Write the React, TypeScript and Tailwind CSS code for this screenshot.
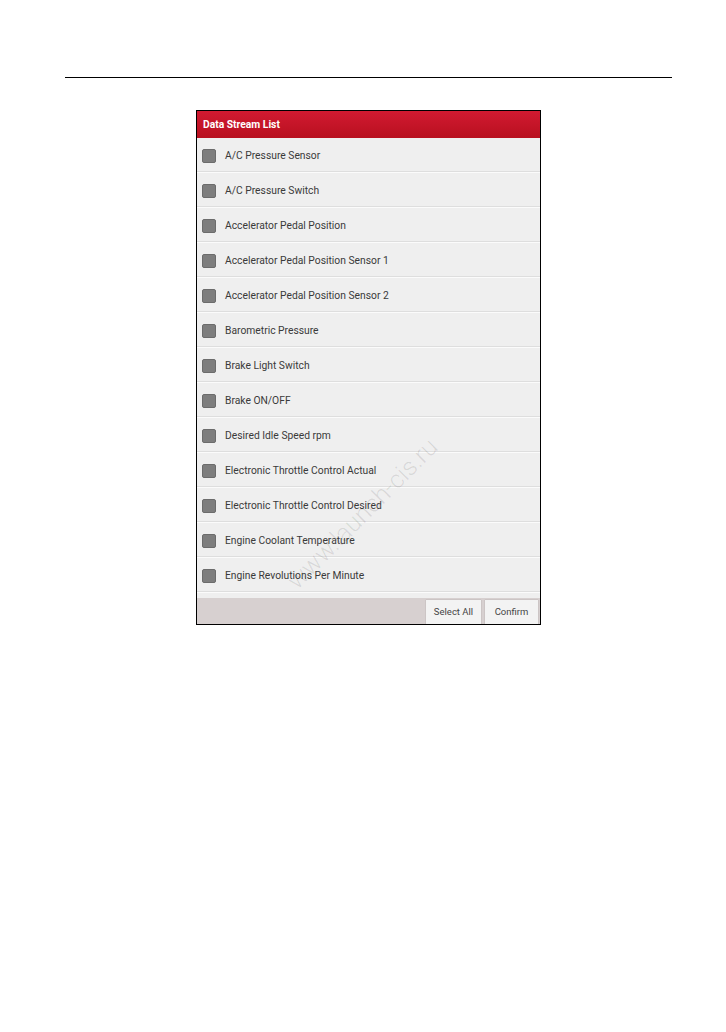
const streams = [
  'A/C Pressure Sensor',
  'A/C Pressure Switch',
  'Accelerator Pedal Position',
  'Accelerator Pedal Position Sensor 1',
  'Accelerator Pedal Position Sensor 2',
  'Barometric Pressure',
  'Brake Light Switch',
  'Brake ON/OFF',
  'Desired Idle Speed rpm',
  'Electronic Throttle Control Actual',
  'Electronic Throttle Control Desired',
  'Engine Coolant Temperature',
  'Engine Revolutions Per Minute',
]

function StreamRow({ label }: { label: string }) {
  return (
    <div className="flex h-[35px] flex-col">
      <div className="flex flex-1 items-center pl-[5px] pt-[2px]">
        <span className="h-[14px] w-[14px] rounded-[2px] border border-[#6c6c6c] bg-[#7e7e7e]" />
        <span className="ml-[9px] text-[10.3px] text-[#3a3a3a]">{label}</span>
      </div>
      <div className="h-px bg-[#dedede]" />
      <div className="h-px bg-[#fbfbfb]" />
    </div>
  )
}

export default function App() {
  return (
    <div
      className="min-h-[1032px] w-full bg-white"
      style={{ fontFamily: 'Roboto, "Liberation Sans", sans-serif' }}
    >
      <div className="h-[77px]" />
      <div className="ml-[65px] h-px w-[607px] bg-black" />
      <div className="relative ml-[196px] mt-[32px] w-[345px] overflow-hidden border border-black">
        <div className="flex h-[27px] items-center bg-gradient-to-b from-[#d21a31] to-[#b8101f] pl-[6px]">
          <span className="text-[10.3px] font-bold text-white">Data Stream List</span>
        </div>
        <div className="bg-[#efefef]">
          {streams.map((s) => (
            <StreamRow key={s} label={s} />
          ))}
          <div className="h-[5px]" />
        </div>
        <div className="flex h-[26px] items-end justify-end gap-[4px] bg-[#d7d0d0] pr-[2px]">
          <button
            type="button"
            className="h-[24px] w-[55px] bg-[#f3f3f3] text-[9.5px] text-[#454545] shadow-[0_0_1px_rgba(0,0,0,0.3)]"
          >
            Select All
          </button>
          <button
            type="button"
            className="h-[24px] w-[53px] bg-[#f3f3f3] text-[9.5px] text-[#454545] shadow-[0_0_1px_rgba(0,0,0,0.3)]"
          >
            Confirm
          </button>
        </div>
        <div className="pointer-events-none absolute left-[65px] top-[384px] -rotate-45 whitespace-nowrap text-[25px] font-light text-black/10">
          www.launch-cis.ru
        </div>
      </div>
    </div>
  )
}
